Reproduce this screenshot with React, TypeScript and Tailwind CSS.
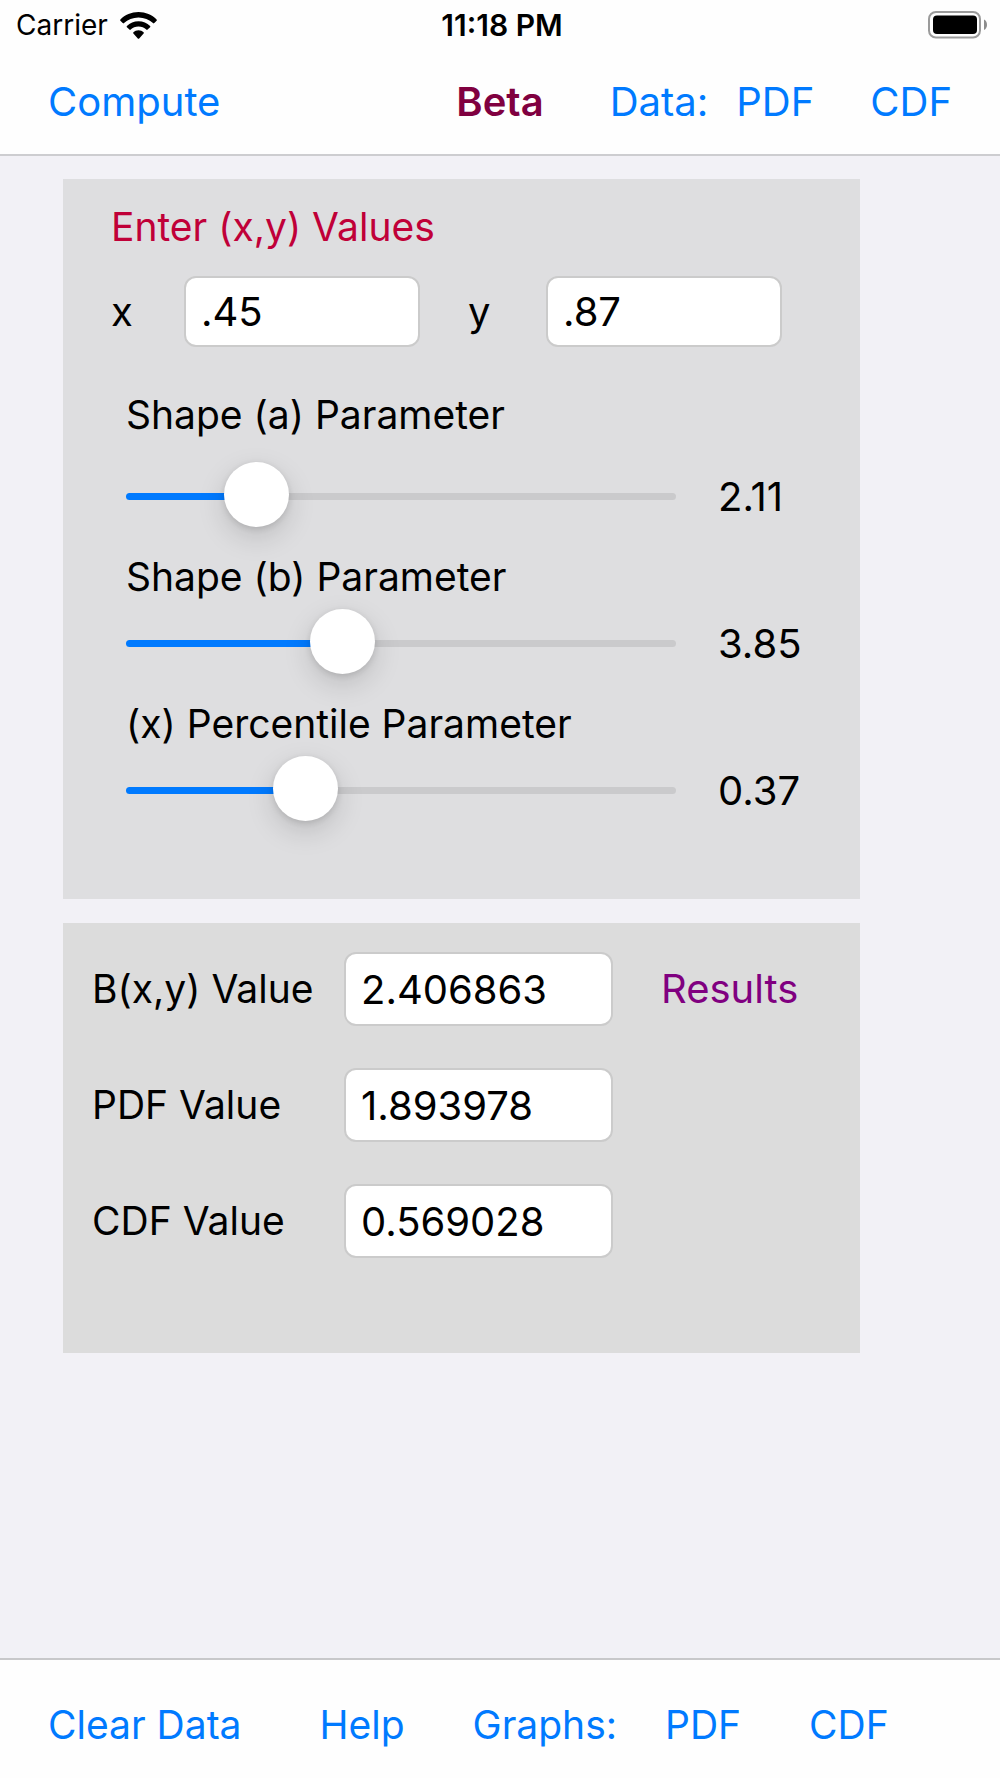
import React, { useState } from 'react';

interface ParameterSliderProps {
  id: string;
  label: string;
  min: number;
  max: number;
  initial: number;
  spaced?: boolean;
}

const ParameterSlider: React.FC<ParameterSliderProps> = ({ id, label, min, max, initial, spaced }) => {
  const [value, setValue] = useState(initial);
  const percent = ((value - min) / (max - min)) * 100;

  return (
    <div className={spaced ? 'flex flex-col gap-[15px]' : 'flex flex-col'}>
      <label htmlFor={id} className="text-[39px] leading-[66px]">
        {label}
      </label>
      <div className="flex items-center gap-[42px]">
        <input
          id={id}
          type="range"
          min={min}
          max={max}
          step={0.01}
          value={value}
          onChange={(e) => setValue(Number(e.target.value))}
          style={{ '--fill': `${percent}%` } as React.CSSProperties}
          className="
            h-[66px] min-w-0 flex-1 appearance-none bg-transparent
            [&::-webkit-slider-runnable-track]:h-[7px]
            [&::-webkit-slider-runnable-track]:rounded-full
            [&::-webkit-slider-runnable-track]:bg-[linear-gradient(to_right,#007aff_var(--fill),#cacacc_var(--fill))]
            [&::-webkit-slider-thumb]:mt-[-31px]
            [&::-webkit-slider-thumb]:size-[65px]
            [&::-webkit-slider-thumb]:appearance-none
            [&::-webkit-slider-thumb]:rounded-full
            [&::-webkit-slider-thumb]:bg-white
            [&::-webkit-slider-thumb]:shadow-[0_10px_28px_rgba(0,0,0,0.15),0_2px_6px_rgba(0,0,0,0.12)]
          "
        />
        <output htmlFor={id} className="w-[102px] pt-0.5">
          {value.toFixed(2)}
        </output>
      </div>
    </div>
  );
};

const fieldClass = 'min-w-0 rounded-xl border-2 border-[#cbcbcb] bg-white px-[15px] outline-none';

const WifiIcon = () => (
  <svg viewBox="0 0 37 27" className="h-[27px] w-[37px]" fill="black" aria-hidden="true">
    <path d="M18.5 0C25.6 0 32 2.8 36.6 7.5c.4.4.4.9 0 1.3l-2.3 2.3c-.4.4-.9.4-1.3 0C29.2 7.5 24.1 5.4 18.5 5.4S7.800 7.500 4 11.100c-.4.4-.9.4-1.300 0L.4 8.800c-.4-.4-.4-.9 0-1.300C5 2.800 11.400 0 18.500 0z" />
    <path d="M18.500 9.200c4.500 0 8.600 1.800 11.600 4.700.4.4.4.9 0 1.300l-2.500 2.400c-.4.4-.9.4-1.300 0-2-1.900-4.800-3.100-7.800-3.100s-5.800 1.200-7.800 3.100c-.4.4-.9.4-1.300 0l-2.500-2.400c-.4-.4-.4-.9 0-1.300 3-2.900 7.100-4.700 11.600-4.700z" />
    <path d="M18.500 18.300c2 0 3.800.8 5.100 2 .4.4.4.900 0 1.300l-4.400 4.900c-.4.4-1 .4-1.400 0l-4.400-4.900c-.4-.4-.4-.900 0-1.300 1.300-1.200 3.100-2 5.100-2z" />
  </svg>
);

const BatteryIcon = () => (
  <svg viewBox="0 0 60 28" className="h-[28px] w-[60px]" aria-hidden="true">
    <rect x="1" y="1" width="51" height="25.5" rx="7" fill="none" stroke="#9b9b9b" strokeWidth="2" />
    <rect x="5" y="4.5" width="44" height="18.5" rx="4" fill="black" />
    <path d="M56 8.5c1.800.8 3 2.800 3 5.200s-1.200 4.400-3 5.200z" fill="#8c8c8c" />
  </svg>
);

export default function App() {
  const [x, setX] = useState('.45');
  const [y, setY] = useState('.87');

  const results = [
    { id: 'beta', label: 'B(x,y) Value', value: '2.406863' },
    { id: 'pdf', label: 'PDF Value', value: '1.893978' },
    { id: 'cdf', label: 'CDF Value', value: '0.569028' },
  ];

  return (
    <div className="flex min-h-screen flex-col bg-[#f2f1f6] font-['Inter',sans-serif] text-[40px] leading-[48px] text-black">
      <header className="border-b-2 border-[#cdcdd0] bg-[#fefefe] pb-7">
        {/* Status bar */}
        <div className="grid grid-cols-[1fr_auto_1fr] items-center pt-2 pr-3 pl-4 text-[28px] leading-[34px]">
          <div className="flex items-center gap-3">
            <span>Carrier</span>
            <WifiIcon />
          </div>
          <span className="text-[30px] leading-[34px] font-semibold">11:18 PM</span>
          <div className="flex justify-end">
            <BatteryIcon />
          </div>
        </div>

        {/* Navigation */}
        <nav className="grid grid-cols-[1fr_auto_1fr] items-center px-12 pt-9 text-[#007aff]">
          <div>
            <button type="button">Compute</button>
          </div>
          <h1 className="font-semibold text-[#800040]">Beta</h1>
          <div className="flex justify-end">
            <span className="mr-7">Data:</span>
            <button type="button" className="mr-14">PDF</button>
            <button type="button">CDF</button>
          </div>
        </nav>
      </header>

      <main className="flex flex-1 flex-col gap-6 pt-[23px] pr-[140px] pl-[63px]">
        <section className="bg-[#dedee0] pb-[76px]">
          <h2 className="px-12 pt-6 text-[39px] text-[#c00038]">Enter (x,y) Values</h2>
          <div className="flex items-center pt-[25px] pr-[78px] pl-12">
            <label htmlFor="x" className="w-[73px]">x</label>
            <input
              id="x"
              value={x}
              onChange={(e) => setX(e.target.value)}
              className={`${fieldClass} h-[71px] flex-1`}
            />
            <label htmlFor="y" className="ml-12 w-[78px]">y</label>
            <input
              id="y"
              value={y}
              onChange={(e) => setY(e.target.value)}
              className={`${fieldClass} h-[71px] flex-1`}
            />
          </div>

          <div className="flex flex-col gap-[15px] pt-[35px] pr-10 pl-[63px]">
            <ParameterSlider id="shape-a" label="Shape (a) Parameter" min={0.1} max={10} initial={2.11} spaced />
            <ParameterSlider id="shape-b" label="Shape (b) Parameter" min={0.1} max={10} initial={3.85} />
            <ParameterSlider id="percentile" label="(x) Percentile Parameter" min={0.1} max={0.99} initial={0.37} />
          </div>
        </section>

        <section className="flex items-start bg-[#dcdcdc] px-[29px] pt-[29px] pb-[95px]">
          <div className="flex flex-col gap-[42px]">
            {results.map((result) => (
              <div key={result.id} className="flex items-center">
                <label htmlFor={result.id} className="w-[252px] text-[39px]">{result.label}</label>
                <input id={result.id} readOnly value={result.value} className={`${fieldClass} h-[74px] w-[269px]`} />
              </div>
            ))}
          </div>
          <h2 className="ml-12 leading-[74px] text-[#800080]">Results</h2>
        </section>
      </main>

      <footer className="flex items-center border-t-2 border-[#c8c8ca] bg-[#fefefe] px-12 pt-[41px] pb-[29px] text-[39px] text-[#007aff]">
        <button type="button" className="mr-[78px]">Clear Data</button>
        <button type="button" className="mr-[68px]">Help</button>
        <span className="mr-12">Graphs:</span>
        <button type="button" className="mr-[68px]">PDF</button>
        <button type="button">CDF</button>
      </footer>
    </div>
  );
}
